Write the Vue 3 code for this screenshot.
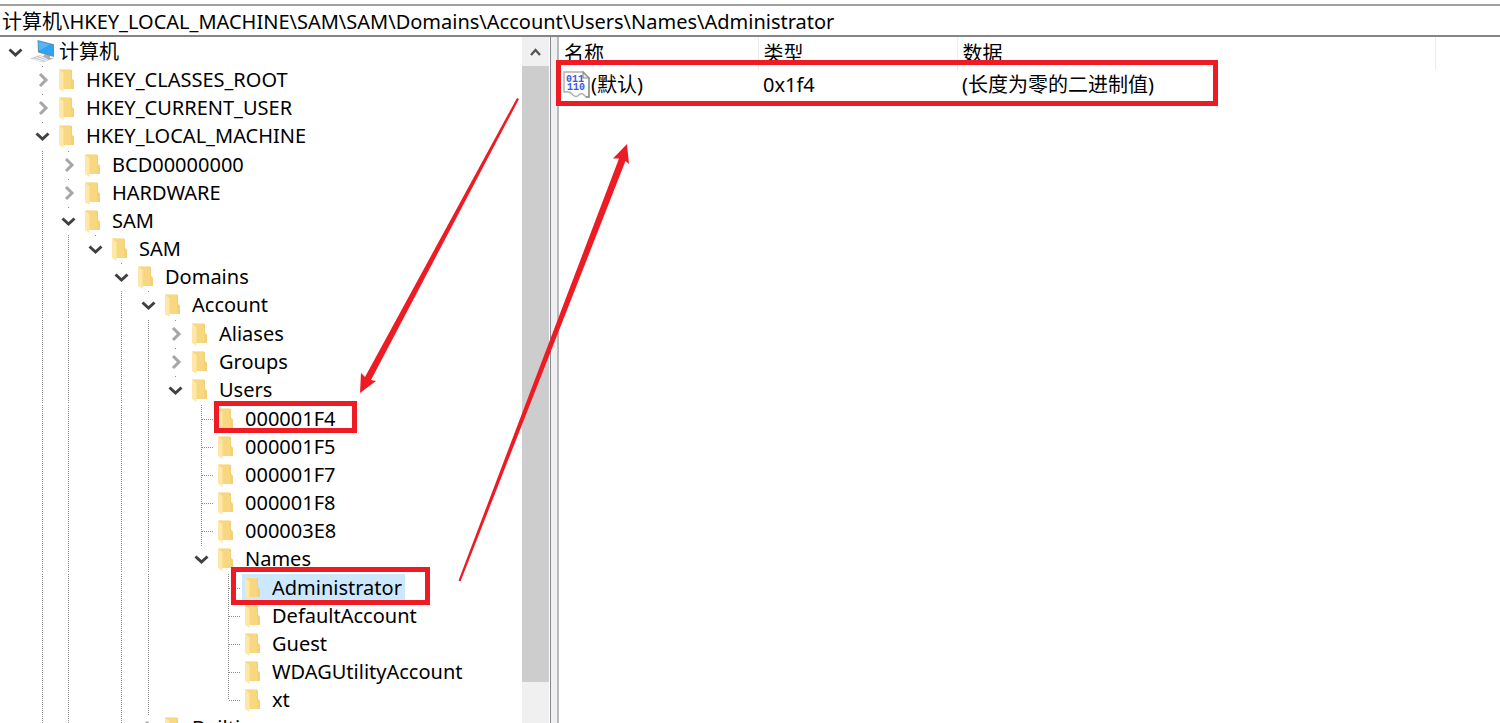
<script setup>
import { ref } from 'vue'

const LEVEL_STEP = 26.6
const indent = (depth) => Math.round(depth * LEVEL_STEP)

const address = ref('计算机\\HKEY_LOCAL_MACHINE\\SAM\\SAM\\Domains\\Account\\Users\\Names\\Administrator')

// guides: depths of ancestors that still have siblings further down
// first: opens a list of several siblings; last: closes its list
const rows = [
  { name: '计算机', depth: 0, state: 'open', root: true, guides: [] },
  { name: 'HKEY_CLASSES_ROOT', depth: 1, state: 'closed', guides: [] },
  { name: 'HKEY_CURRENT_USER', depth: 1, state: 'closed', guides: [] },
  { name: 'HKEY_LOCAL_MACHINE', depth: 1, state: 'open', guides: [] },
  { name: 'BCD00000000', depth: 2, state: 'closed', first: true, guides: [1] },
  { name: 'HARDWARE', depth: 2, state: 'closed', guides: [1] },
  { name: 'SAM', depth: 2, state: 'open', guides: [1] },
  { name: 'SAM', depth: 3, state: 'open', guides: [1, 2] },
  { name: 'Domains', depth: 4, state: 'open', guides: [1, 2] },
  { name: 'Account', depth: 5, state: 'open', guides: [1, 2, 4] },
  { name: 'Aliases', depth: 6, state: 'closed', first: true, guides: [1, 2, 4, 5] },
  { name: 'Groups', depth: 6, state: 'closed', guides: [1, 2, 4, 5] },
  { name: 'Users', depth: 6, state: 'open', guides: [1, 2, 4, 5] },
  { name: '000001F4', depth: 7, state: 'leaf', first: true, guides: [1, 2, 4, 5] },
  { name: '000001F5', depth: 7, state: 'leaf', guides: [1, 2, 4, 5] },
  { name: '000001F7', depth: 7, state: 'leaf', guides: [1, 2, 4, 5] },
  { name: '000001F8', depth: 7, state: 'leaf', guides: [1, 2, 4, 5] },
  { name: '000003E8', depth: 7, state: 'leaf', guides: [1, 2, 4, 5] },
  { name: 'Names', depth: 7, state: 'open', guides: [1, 2, 4, 5] },
  { name: 'Administrator', depth: 8, state: 'leaf', first: true, selected: true, guides: [1, 2, 4, 5] },
  { name: 'DefaultAccount', depth: 8, state: 'leaf', guides: [1, 2, 4, 5] },
  { name: 'Guest', depth: 8, state: 'leaf', guides: [1, 2, 4, 5] },
  { name: 'WDAGUtilityAccount', depth: 8, state: 'leaf', guides: [1, 2, 4, 5] },
  { name: 'xt', depth: 8, state: 'leaf', last: true, guides: [1, 2, 4, 5] },
  { name: 'Builtin', depth: 5, state: 'closed', guides: [1, 2, 4] },
]
</script>

<template>
  <div class="window">
    <div class="address">
      <input v-model="address" type="text" aria-label="地址" spellcheck="false" />
    </div>

    <main class="panes">
      <section class="tree-pane">
        <ul class="tree">
          <li v-for="(row, i) in rows" :key="i" class="row" :class="{ first: row.first }">
            <svg class="gutter" :width="indent(row.depth)" height="28" aria-hidden="true">
              <line
                v-for="g in row.guides"
                :key="g"
                class="guide"
                :x1="indent(g) + 14.5"
                :x2="indent(g) + 14.5"
                y1="0"
                y2="28"
              />
            </svg>

            <svg v-if="row.state === 'leaf'" class="toggle" viewBox="0 0 28 28" aria-hidden="true">
              <line class="guide" x1="14.5" x2="14.5" y1="0" :y2="row.last ? 14 : 28" />
              <line class="guide" x1="15" x2="26" y1="14.5" y2="14.5" />
            </svg>
            <button v-else class="toggle" type="button" :aria-label="(row.state === 'open' ? '折叠 ' : '展开 ') + row.name">
              <svg viewBox="0 0 28 28" aria-hidden="true">
                <line v-if="!row.root" class="guide" x1="14.5" x2="14.5" y1="0" y2="1" />
                <path v-if="row.state === 'open'" class="chevron open" d="M8.5 11.5 L14.5 17 L20.5 11.5" />
                <path v-else class="chevron" d="M12 8 L18 14 L12 20" />
              </svg>
            </button>

            <button type="button" class="key" :class="{ selected: row.selected }">
              <svg v-if="row.root" class="icon" viewBox="0 0 30 26" aria-hidden="true">
                <path d="M1 19.5 L11 16 L21 20.5 L14 23.5 Z" fill="#c6cacd" />
                <path d="M4 19.8 L14 22.6 M7 18.4 L17 21.6 M10 17 L19 20.6" stroke="#f4f4f4" stroke-width="1" />
                <path d="M16 15 L21 16.5 L21 19 L25 19.5 L20 21 L14 17.5 Z" fill="#a9afb4" />
                <path d="M8.5 1 L25 5.3 L25 18 L9 13.4 Z" fill="#6f8fa3" />
                <path d="M9.5 2.4 L24 6.2 L24 16.6 L10 12.6 Z" fill="#2ba5f5" />
                <path d="M9.5 2.4 L21 5.4 L10 11.5 Z" fill="#52b8fa" />
              </svg>
              <svg v-else class="icon" viewBox="0 0 30 26" aria-hidden="true">
                <path d="M4 3 H16 V12 L18 14 V22 H4 Z" fill="#f7d881" />
                <path d="M14.5 3 H16 V12 L18 14 V22 H15.5 Z" fill="#f4d079" />
                <path d="M3 3 L7.5 6 V25 L3 22 Z" fill="#ffe7a8" />
                <path d="M3 2.5 H15" stroke="#fbe6b0" stroke-width="1" />
              </svg>
              <span>{{ row.name }}</span>
            </button>
          </li>
        </ul>

        <div class="scrollbar">
          <button type="button" class="scroll-up" aria-label="向上滚动">
            <svg viewBox="0 0 26 28" aria-hidden="true">
              <path d="M9 17 L13.5 12 L18 17" fill="none" stroke="#555" stroke-width="2.4" />
            </svg>
          </button>
          <div class="thumb"></div>
          <div class="track-end"></div>
        </div>
      </section>

      <div class="splitter"></div>

      <section class="values-pane">
        <table>
          <colgroup>
            <col class="col-name" />
            <col class="col-type" />
            <col class="col-data" />
            <col />
          </colgroup>
          <thead>
            <tr>
              <th scope="col">名称</th>
              <th scope="col">类型</th>
              <th scope="col">数据</th>
              <td></td>
            </tr>
          </thead>
          <tbody>
            <tr>
              <td>
                <div class="value-name">
                  <svg class="binary" viewBox="0 0 27 28" aria-hidden="true">
                    <path
                      d="M0 1 H19 L25 7 V26 H22 L19 23 Q16 22 15 24 Q12 27 9 24 Q6 20 0 21 Z"
                      fill="#fcfcfc"
                      stroke="#b0b0b0"
                      stroke-width="1.4"
                    />
                    <path d="M19 1 V7 H25 Z" fill="#e6e6e6" stroke="#8f8f8f" stroke-width="1.2" />
                    <path d="M25 7 V26 H22" fill="none" stroke="#8f8f8f" stroke-width="1.4" />
                    <text x="2" y="11">011</text>
                    <text x="3" y="19">110</text>
                  </svg>
                  <span>(默认)</span>
                </div>
              </td>
              <td>0x1f4</td>
              <td>(长度为零的二进制值)</td>
              <td></td>
            </tr>
          </tbody>
        </table>
      </section>
    </main>

    <svg class="marks" aria-hidden="true">
      <g fill="none" stroke="#ed1c24" stroke-width="5">
        <rect x="216.5" y="403.5" width="138" height="27" />
        <rect x="233.5" y="569.5" width="194" height="33" />
        <rect x="558.5" y="62.5" width="657" height="41" />
      </g>
      <g fill="#ed1c24">
        <path d="M519 99 L517 98 L365 377 L361 373 L360 393 L376 381 L371 380 Z" />
        <path d="M458.5 580.5 L460.5 581.5 L625.5 161 L629 164 L627 144 L613 158.5 L619 158.5 Z" />
      </g>
    </svg>
  </div>
</template>

<style>
body {
  margin: 0;
  overflow: hidden;
}
</style>

<style scoped>
.window {
  position: relative;
  display: flex;
  flex-direction: column;
  height: 100vh;
  overflow: hidden;
  background: #fff;
  color: #000;
  font-family: "Noto Sans", "Noto Sans CJK SC", sans-serif;
  font-size: 20px;
  line-height: 28px;
}

button,
input {
  margin: 0;
  padding: 0;
  border: 0;
  background: none;
  color: inherit;
  font: inherit;
}

.address {
  flex: none;
  display: flex;
  margin-top: 4px;
  border-top: 2px solid #a0a0a0;
  border-bottom: 2px solid #84848a;
}

.address input {
  flex: 1;
  min-width: 0;
  height: 29px;
  padding-left: 2px;
  outline: 0;
}

.panes {
  flex: 1;
  display: flex;
  min-height: 0;
}

.tree-pane {
  flex: none;
  display: flex;
  width: 550px;
  min-height: 0;
  overflow: hidden;
}

.tree {
  flex: 1;
  min-width: 0;
  margin: 0;
  padding: 1px 0 0 1px;
  list-style: none;
}

.row {
  display: flex;
  height: 28px;
  white-space: nowrap;
}

.row.first {
  margin-top: 1px;
}

.gutter {
  flex: none;
  display: block;
}

.guide {
  stroke: #8c8c8c;
  stroke-width: 1;
  stroke-dasharray: 1 1;
}

.toggle {
  flex: none;
  display: block;
  width: 28px;
  height: 28px;
}

.toggle svg {
  display: block;
}

.chevron {
  fill: none;
  stroke: #a6a6a6;
  stroke-width: 3;
}

.chevron.open {
  stroke: #404040;
}

.key {
  display: flex;
  align-items: center;
  padding-right: 3px;
}

.key.selected {
  background: #cce8ff;
}

.icon {
  flex: none;
  width: 30px;
  height: 26px;
}

.scrollbar {
  flex: none;
  display: flex;
  flex-direction: column;
  width: 27px;
  margin-right: 1px;
  background: #f0f0f0;
}

.scroll-up {
  flex: none;
  display: block;
  height: 29px;
}

.scroll-up svg {
  display: block;
  width: 26px;
  height: 28px;
}

.thumb {
  flex: 15;
  background: #cdcdcd;
}

.track-end {
  flex: 1;
}

.splitter {
  flex: none;
  width: 6px;
  border-left: 1px solid #85858f;
  border-right: 2px solid #b9b9c0;
  background: #f0f0f0;
}

.values-pane {
  flex: 1;
  min-width: 0;
  overflow: hidden;
}

table {
  width: 100%;
  table-layout: fixed;
  border-collapse: collapse;
}

.col-name,
.col-type {
  width: 199px;
}

.col-data {
  width: 478px;
}

th,
td {
  padding: 0 0 0 5px;
  font-weight: 400;
  text-align: left;
  white-space: nowrap;
}

th {
  height: 33px;
  border-right: 1px solid #ececec;
}

tbody td {
  height: 30px;
}

.value-name {
  display: flex;
  align-items: center;
}

.binary {
  flex: none;
  width: 27px;
  height: 28px;
  overflow: visible;
}

.binary text {
  fill: #3a5be0;
  font-family: "Liberation Mono", monospace;
  font-size: 10px;
  font-weight: 700;
}

.marks {
  position: absolute;
  inset: 0;
  width: 100%;
  height: 100%;
  pointer-events: none;
}
</style>
